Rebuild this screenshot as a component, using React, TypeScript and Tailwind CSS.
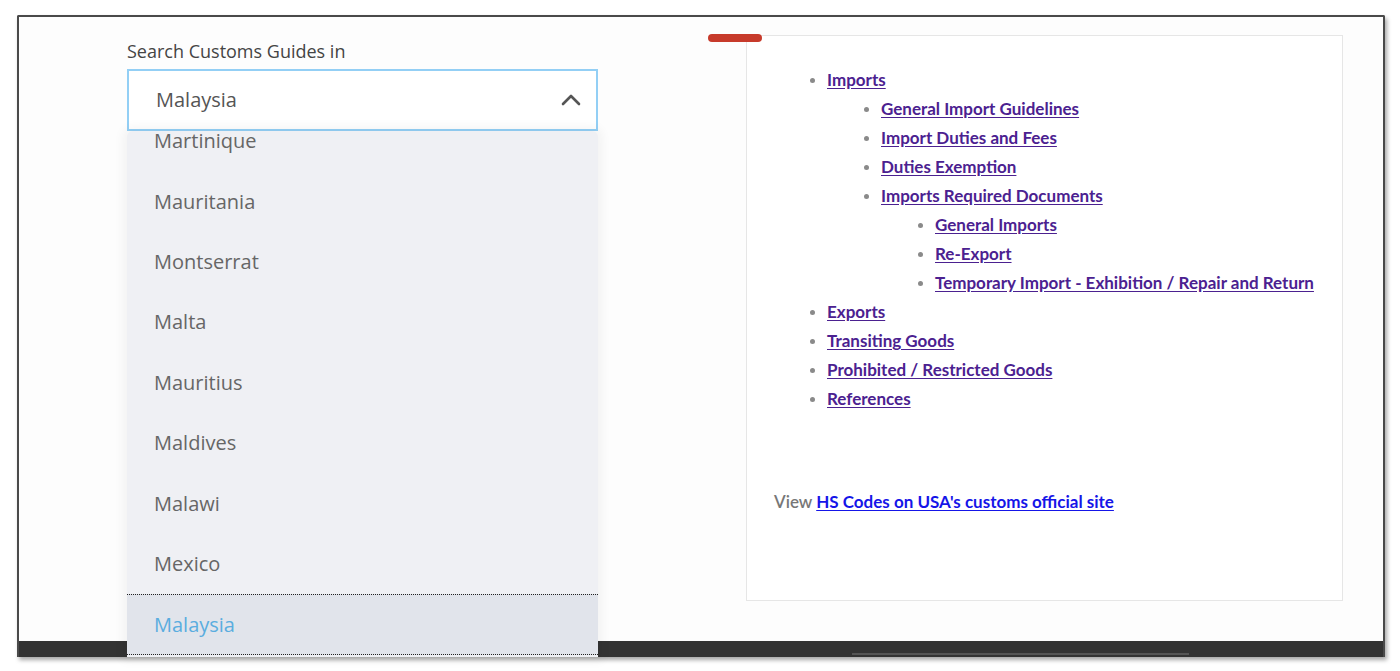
import React from 'react';

const countries = [
  'Martinique',
  'Mauritania',
  'Montserrat',
  'Malta',
  'Mauritius',
  'Maldives',
  'Malawi',
  'Mexico',
];

type Item = { label: string; children?: Item[] };

const guide: Item[] = [
  {
    label: 'Imports',
    children: [
      { label: 'General Import Guidelines' },
      { label: 'Import Duties and Fees' },
      { label: 'Duties Exemption' },
      {
        label: 'Imports Required Documents',
        children: [
          { label: 'General Imports' },
          { label: 'Re-Export' },
          { label: 'Temporary Import - Exhibition / Repair and Return' },
        ],
      },
    ],
  },
  { label: 'Exports' },
  { label: 'Transiting Goods' },
  { label: 'Prohibited / Restricted Goods' },
  { label: 'References' },
];

function GuideList({ items, top }: { items: Item[]; top?: boolean }) {
  return (
    <ul className={`list-disc marker:text-[#8a8a8a] marker:text-[15px] ${top ? 'pl-[53px]' : 'pl-[54px]'}`}>
      {items.map((item) => (
        <li key={item.label} className="leading-[29px]">
          <a href="#" className="font-bold text-[#4b2190] underline underline-offset-2">
            {item.label}
          </a>
          {item.children && <GuideList items={item.children} />}
        </li>
      ))}
    </ul>
  );
}

export default function App() {
  return (
    <div className="min-h-screen bg-white pt-[15px] pl-[17px] font-['Lato',sans-serif]">
      <div className="w-[1368px] h-[642px] border-t-2 border-x-2 border-[#4a4a4a] rounded-t-[2px] shadow-[2px_3px_4px_rgba(0,0,0,0.35)] flex flex-col">
        {/* Content */}
        <div className="relative flex h-[624px] bg-[#fdfdfd]">
          {/* Country selector */}
          <div className="ml-[108px] mt-[22px] w-[471px]">
            <div className="text-[18px] leading-[24px] text-[#444] font-['Open_Sans',sans-serif]">
              Search Customs Guides in
            </div>
            <div className="relative mt-[6px]">
              <div className="flex h-[62px] items-center justify-between border-2 border-[#93cff5] bg-white pl-[27px] pr-[14px]">
                <span className="text-[20px] text-[#555] font-['Open_Sans',sans-serif]">Malaysia</span>
                <svg width="22" height="14" viewBox="0 0 22 14" fill="none">
                  <polyline points="3,11 11,3 19,11" stroke="#555" strokeWidth="2.6" strokeLinecap="round" strokeLinejoin="round" />
                </svg>
              </div>

              {/* Open dropdown */}
              <div className="absolute left-0 top-full z-10 h-[526px] w-[471px] overflow-hidden rounded-t-[6px] bg-[#eff0f4] shadow-[0_0_10px_5px_rgba(0,0,0,0.04)]">
                <div className="-mt-[20px] font-['Open_Sans',sans-serif] text-[20px] text-[#666]">
                  {countries.map((c) => (
                    <div key={c} className="flex h-[60.4px] items-center pl-[27px]">
                      {c}
                    </div>
                  ))}
                  <div className="flex h-[61px] items-center border-y border-dotted border-[#222] bg-[#e1e4eb] pl-[27px] text-[#5aaddf]">
                    Malaysia
                  </div>
                </div>
              </div>
            </div>
          </div>

          {/* Guide card */}
          <div className="relative ml-[148px] mt-[18px] h-[566px] w-[597px] border border-[#e6e6e6] bg-white pl-[27px] pt-[29px] text-[17px]">
            <div className="absolute -left-[39px] -top-[2px] h-[8px] w-[54px] rounded-full bg-[#c73a2b]" />
            <GuideList items={guide} top />
            <p className="mt-[74px] leading-[29px] text-[#777] font-semibold">
              View{' '}
              <a href="#" className="font-bold text-[#1515e8] underline underline-offset-2">
                HS Codes on USA's customs official site
              </a>
            </p>
          </div>
        </div>

        {/* Bottom bar */}
        <div className="flex h-[16px] items-end bg-[#333]">
          <div className="mb-[2px] ml-[833px] h-[2px] w-[337px] bg-[#555]" />
        </div>
      </div>
    </div>
  );
}
